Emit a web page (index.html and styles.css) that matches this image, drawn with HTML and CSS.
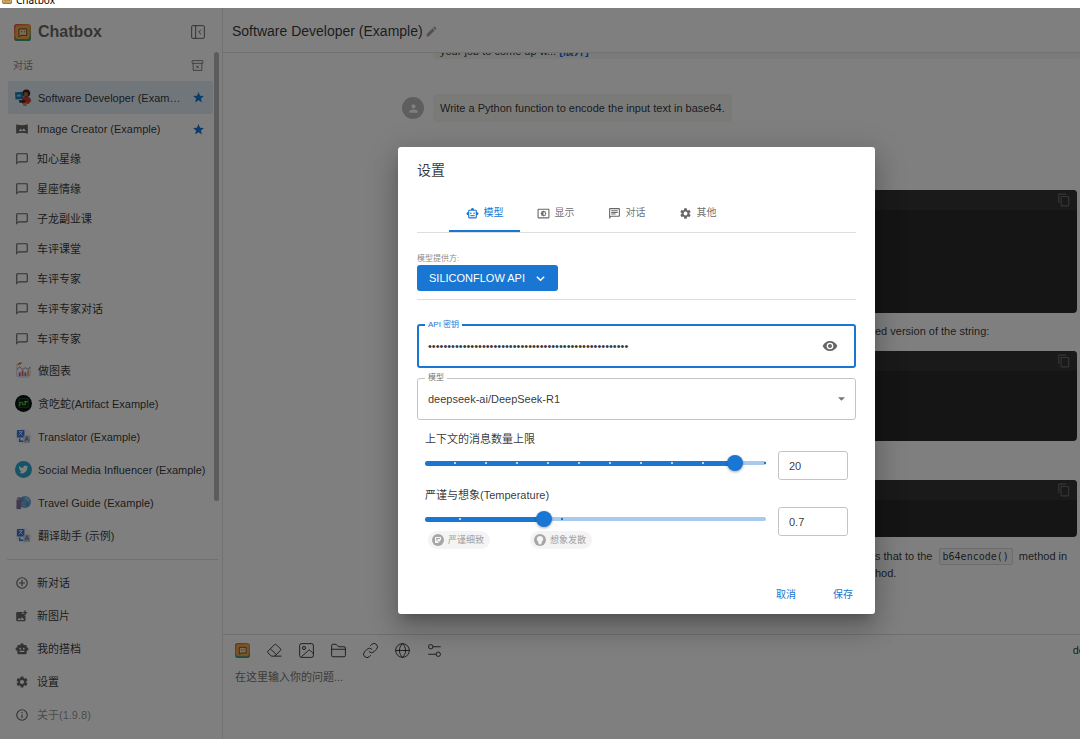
FILE: index.html
```html
<!DOCTYPE html>
<html lang="zh-CN">
<head>
<meta charset="utf-8">
<title>Chatbox</title>
<link rel="stylesheet" href="styles.css">
</head>
<body>
<svg class="sprite" aria-hidden="true">
  <defs>
    <linearGradient id="logo-edge" x1="0" y1="0" x2="1" y2="1"><stop offset="0" stop-color="#e0503c"/><stop offset=".5" stop-color="#e89a3c"/><stop offset="1" stop-color="#3c9a8c"/></linearGradient>
  </defs>
  <symbol id="logo" viewBox="0 0 24 24"><rect width="24" height="24" rx="4" fill="url(#logo-edge)"/><path d="M1 17v3a4 4 0 0 0 4 4h14a4 4 0 0 0 4-4v-3z" fill="#3c9a7c"/><rect x="2" y="2" width="20" height="19" rx="3" fill="#f0a850"/><path d="M7 7h11v9h-8l-3 2z" fill="#f6d9a8" stroke="#7a4a28" stroke-width="1.4" stroke-linejoin="round"/><path d="M10 11h1.5M14 11h1.5" stroke="#7a4a28" stroke-width="1.6"/></symbol>
  <symbol id="bubble" viewBox="0 0 24 24"><path d="M20 2H4c-1.100 0-2 .9-2 2v18l4-4h14c1.100 0 2-.9 2-2V4c0-1.100-.9-2-2-2zm0 14H6l-2 2V4h16v12z"/></symbol>
  <symbol id="star" viewBox="0 0 24 24"><path d="M12 17.270 18.180 21l-1.640-7.030L22 9.240l-7.190-.61L12 2 9.190 8.630 2 9.240l5.460 4.730L5.820 21z"/></symbol>
  <symbol id="gear" viewBox="0 0 24 24"><path d="M19.140 12.940c.04-.3.06-.61.06-.94 0-.32-.02-.64-.07-.94l2.030-1.580c.18-.14.23-.41.12-.61l-1.920-3.320c-.12-.22-.37-.29-.59-.22l-2.390.96c-.5-.38-1.030-.7-1.620-.94l-.36-2.540c-.04-.24-.24-.41-.48-.41h-3.840c-.24 0-.43.17-.47.41l-.36 2.540c-.59.24-1.130.57-1.620.94l-2.390-.96c-.22-.08-.47 0-.59.22L2.740 8.870c-.12.21-.08.47.12.61l2.030 1.580c-.05.3-.09.63-.09.94s.02.64.07.94l-2.030 1.580c-.18.14-.23.41-.12.61l1.920 3.320c.12.22.37.29.59.22l2.390-.96c.5.38 1.030.7 1.620.94l.36 2.540c.05.24.24.41.48.41h3.840c.24 0 .44-.17.47-.41l.36-2.540c.59-.24 1.130-.56 1.620-.94l2.390.96c.22.08.47 0 .59-.22l1.920-3.320c.12-.22.07-.47-.12-.61l-2.010-1.580zM12 15.600a3.600 3.600 0 1 1 0-7.200 3.600 3.600 0 0 1 0 7.200z"/></symbol>
  <symbol id="robot" viewBox="0 0 24 24"><path d="M20 9V7c0-1.100-.9-2-2-2h-3c0-1.660-1.340-3-3-3S9 3.340 9 5H6c-1.100 0-2 .9-2 2v2c-1.660 0-3 1.340-3 3s1.340 3 3 3v4c0 1.100.9 2 2 2h12c1.100 0 2-.9 2-2v-4c1.660 0 3-1.340 3-3s-1.340-3-3-3zM7.500 11.500a1.500 1.500 0 1 1 3 0 1.500 1.500 0 0 1-3 0zM16 17H8v-2h8v2zm-1-4a1.500 1.500 0 1 1 0-3 1.500 1.500 0 0 1 0 3z"/></symbol>
  <symbol id="robot-line" viewBox="0 0 24 24"><path fill-rule="evenodd" d="M20 9V7c0-1.100-.9-2-2-2h-3c0-1.660-1.340-3-3-3S9 3.340 9 5H6c-1.100 0-2 .9-2 2v2c-1.660 0-3 1.340-3 3s1.340 3 3 3v4c0 1.100.9 2 2 2h12c1.100 0 2-.9 2-2v-4c1.660 0 3-1.340 3-3s-1.340-3-3-3zM18 19H6V7h12v12z"/><circle cx="9" cy="11.500" r="1.500"/><circle cx="15" cy="11.500" r="1.500"/><path d="M8 15h8v2H8z"/></symbol>
  <symbol id="display" viewBox="0 0 24 24"><path d="M21 3H3c-1.100 0-2 .9-2 2v14c0 1.100.9 2 2 2h18c1.100 0 2-.9 2-2V5c0-1.100-.9-2-2-2zm0 16H3V5h18v14z"/><path fill-rule="evenodd" d="M8 16h2.500l1.500 1.500 1.500-1.500H16v-2.500l1.500-1.500-1.500-1.500V8h-2.500L12 6.500 10.500 8H8v2.500L6.500 12 8 13.500zM12 9a3 3 0 0 1 0 6z"/></symbol>
  <symbol id="chat" viewBox="0 0 24 24"><path d="M4 4h16v12H5.200L4 17.200V4m0-2c-1.100 0-2 .9-2 2v18l4-4h14c1.100 0 2-.9 2-2V4c0-1.100-.9-2-2-2H4zm2 10h8v2H6v-2zm0-3h12v2H6V9zm0-3h12v2H6V6z"/></symbol>
  <symbol id="copy" viewBox="0 0 24 24"><path d="M16 1H4c-1.100 0-2 .9-2 2v14h2V3h12V1zm3 4H8c-1.100 0-2 .9-2 2v14c0 1.100.9 2 2 2h11c1.100 0 2-.9 2-2V7c0-1.100-.9-2-2-2zm0 16H8V7h11v14z"/></symbol>
  <symbol id="pencil" viewBox="0 0 24 24"><path d="M3 17.250V21h3.750L17.810 9.940l-3.750-3.750L3 17.250zM20.710 7.040c.39-.39.39-1.020 0-1.410l-2.340-2.340c-.39-.39-1.020-.39-1.410 0l-1.830 1.830 3.750 3.750 1.830-1.830z"/></symbol>
  <symbol id="person" viewBox="0 0 24 24"><path d="M12 12c2.210 0 4-1.790 4-4s-1.790-4-4-4-4 1.790-4 4 1.790 4 4 4zm0 2c-2.670 0-8 1.340-8 4v2h16v-2c0-2.660-5.330-4-8-4z"/></symbol>
  <symbol id="eye" viewBox="0 0 24 24"><path d="M12 4.500C7 4.500 2.730 7.610 1 12c1.730 4.390 6 7.500 11 7.500s9.270-3.110 11-7.500c-1.730-4.390-6-7.500-11-7.500zM12 17a5 5 0 1 1 0-10 5 5 0 0 1 0 10zm0-8a3 3 0 1 0 0 6 3 3 0 0 0 0-6z"/></symbol>
  <symbol id="plus" viewBox="0 0 24 24"><path d="M13 7h-2v4H7v2h4v4h2v-4h4v-2h-4V7zm-1-5a10 10 0 1 0 0 20 10 10 0 0 0 0-20zm0 18a8 8 0 1 1 0-16 8 8 0 0 1 0 16z"/></symbol>
  <symbol id="info" viewBox="0 0 24 24"><path d="M11 7h2v2h-2zm0 4h2v6h-2zm1-9a10 10 0 1 0 0 20 10 10 0 0 0 0-20zm0 18a8 8 0 1 1 0-16 8 8 0 0 1 0 16z"/></symbol>
  <symbol id="add-photo" viewBox="0 0 24 24"><path d="M19 7v3h-3V7h-3V5h3V2h2v3h3v2zM18 11h-2V8h-4V5H4a2 2 0 0 0-2 2v12c0 1.100.9 2 2 2h12a2 2 0 0 0 2-2zM4 19l3-4 2 3 3-4 4 5z"/></symbol>
  <symbol id="panorama" viewBox="0 0 24 24"><path d="M21.400 4c-.1 0-.2 0-.4.100C18 5 15 5.400 12 5.400S6 5 3 4.100C2.400 3.900 2 4.200 2 4.900v14.200c0 .7.400 1 1 .8 3-.9 6-1.300 9-1.300s6 .4 9 1.300c.6.2 1-.1 1-.8V4.900c0-.6-.3-.9-.6-.9zM6 16.200l3.500-5 2.700 3.300 3-4 3.800 5.700c-4.300-.8-8.700-.8-13 0z"/></symbol>
</svg>

<header class="titlebar"><svg class="titlebar-logo"><use href="#logo"/></svg><span>Chatbox</span></header>

<div class="app">
  <aside class="sidebar">
    <div class="brand">
      <svg class="brand-logo"><use href="#logo"/></svg>
      <h1>Chatbox</h1>
      <button class="icon-button" aria-label="收起"><svg class="i16 line" viewBox="0 0 24 24"><rect x="2.500" y="2.500" width="19" height="19" rx="1.500"/><path d="M8.500 2.500v19M16.500 8.500 13 12l3.500 3.500"/></svg></button>
    </div>
    <div class="list-head">
      <span>对话</span>
      <button class="icon-button" aria-label="清空"><svg class="i13 line" viewBox="0 0 24 24"><rect x="2" y="3" width="20" height="5" rx="1"/><path d="M4 8v13h16V8M9.500 12l5 5M14.500 12l-5 5"/></svg></button>
    </div>
    <nav class="sessions">
      <a class="row tall selected" href="#"><svg class="avatar" viewBox="0 0 18 18"><path d="M0 3.500 9 3v7.500l-8.500.5z" fill="#1f7fae"/><path d="M2 6h4v2H2z" fill="#8cd3ee"/><circle cx="12" cy="4.500" r="4" fill="#38221f"/><circle cx="11.500" cy="5.500" r="2.300" fill="#a4683f"/><path d="M7 13c0-4 2-5 5-5s5 2 5 5l-3 3H8z" fill="#d8362c"/><path d="M4 12h7v2.500H5z" fill="#302e3c"/><path d="m8 15 5-1-1 4H9z" fill="#d98a33"/></svg><span>Software Developer (Example)</span><svg class="star"><use href="#star"/></svg></a>
      <a class="row" href="#"><svg class="glyph"><use href="#panorama"/></svg><span>Image Creator (Example)</span><svg class="star"><use href="#star"/></svg></a>
      <a class="row" href="#"><svg class="glyph"><use href="#bubble"/></svg><span>知心星缘</span></a>
      <a class="row" href="#"><svg class="glyph"><use href="#bubble"/></svg><span>星座情缘</span></a>
      <a class="row" href="#"><svg class="glyph"><use href="#bubble"/></svg><span>子龙副业课</span></a>
      <a class="row" href="#"><svg class="glyph"><use href="#bubble"/></svg><span>车评课堂</span></a>
      <a class="row" href="#"><svg class="glyph"><use href="#bubble"/></svg><span>车评专家</span></a>
      <a class="row" href="#"><svg class="glyph"><use href="#bubble"/></svg><span>车评专家对话</span></a>
      <a class="row" href="#"><svg class="glyph"><use href="#bubble"/></svg><span>车评专家</span></a>
      <a class="row tall" href="#"><svg class="avatar" viewBox="0 0 18 18"><path d="M2 2v13l3 1h9l2-2V6" fill="none" stroke="#c9c6da"/><path d="m2 8 3-3 3 3 3-2 3 2 2-3" fill="none" stroke="#8584a4"/><path d="M3 2.500 7 1" stroke="#d47c43" stroke-width="2"/><path d="M5 15V11" stroke="#c5568b" stroke-width="2"/><path d="M8 15V9" stroke="#e8614f" stroke-width="2"/><path d="M11 15v-4" stroke="#5c7cda" stroke-width="2"/><path d="M14 15V9" stroke="#e8a044" stroke-width="2"/></svg><span>做图表</span></a>
      <a class="row tall" href="#"><svg class="avatar" viewBox="0 0 18 18"><circle cx="9" cy="9" r="9" fill="#0a1410"/><path d="M4 4h10v9H4z" fill="#061a0c" stroke="#245a38"/><path d="M5 12V8h3v2h3V7h3" fill="none" stroke="#3da834" stroke-width="1.500"/><circle cx="11" cy="7" r="1" fill="#d8c030"/></svg><span>贪吃蛇(Artifact Example)</span></a>
      <a class="row tall" href="#"><svg class="avatar" viewBox="0 0 18 18"><circle cx="9" cy="9" r="8.500" fill="#f4f4f6"/><rect x="2" y="2" width="8" height="8" rx="1" fill="#3872e0"/><path d="M4 4h4M6 3v1M4 8l3.500-4M5 5l3 3" stroke="#fff" stroke-width=".8"/><path d="M5 11v3h4" fill="none" stroke="#3872e0" stroke-width="1.500"/><rect x="9" y="8" width="7" height="8" rx="1" fill="#c8ccd4"/><path d="m10.500 14 2-5 2 5M11 12.500h3" fill="none" stroke="#5578b8"/></svg><span>Translator (Example)</span></a>
      <a class="row tall" href="#"><svg class="avatar" viewBox="0 0 18 18"><circle cx="9" cy="9" r="9" fill="#27a9d3"/><path d="M14 5.800c-.4.200-.8.300-1.200.3.400-.2.700-.6.900-1-.4.200-.8.400-1.300.5A2.100 2.100 0 0 0 8.800 7.500 6 6 0 0 1 4.500 5.300a2.100 2.100 0 0 0 .7 2.800c-.3 0-.7-.1-.9-.3 0 1 .7 1.900 1.700 2.100-.3.100-.6.100-.9 0 .2.800 1 1.500 1.900 1.500A4.300 4.300 0 0 1 4 12.300a6 6 0 0 0 9-5.400c.4-.3.700-.7 1-1.100z" fill="#fff"/></svg><span class="full">Social Media Influencer (Example)</span></a>
      <a class="row tall" href="#"><svg class="avatar" viewBox="0 0 18 18"><circle cx="10.500" cy="8.500" r="6.500" fill="#62b2d8"/><path d="M6 4c3-2 4 1 3 3s-2 3-4 1zM11 9c3-2 5 0 4 3s-3 2-4 0z" fill="#728cc9"/><path d="m11 4 4 3" stroke="#d9e9f5"/><path d="M1.500 6h5v10h-5z" fill="#8770a5"/><path d="M3 6V4h2v2" fill="none" stroke="#675a86"/></svg><span>Travel Guide (Example)</span></a>
      <a class="row tall" href="#"><svg class="avatar" viewBox="0 0 18 18"><circle cx="9" cy="9" r="8.500" fill="#f4f4f6"/><rect x="2" y="2" width="8" height="8" rx="1" fill="#3872e0"/><path d="M4 4h4M6 3v1M4 8l3.500-4M5 5l3 3" stroke="#fff" stroke-width=".8"/><path d="M5 11v3h4" fill="none" stroke="#3872e0" stroke-width="1.500"/><rect x="9" y="8" width="7" height="8" rx="1" fill="#c8ccd4"/><path d="m10.500 14 2-5 2 5M11 12.500h3" fill="none" stroke="#5578b8"/></svg><span>翻译助手 (示例)</span></a>
      <i class="scroll-thumb"></i>
    </nav>
    <nav class="menu">
      <a class="row tall" href="#"><svg class="glyph"><use href="#plus"/></svg><span>新对话</span></a>
      <a class="row tall" href="#"><svg class="glyph"><use href="#add-photo"/></svg><span>新图片</span></a>
      <a class="row tall" href="#"><svg class="glyph"><use href="#robot"/></svg><span>我的搭档</span></a>
      <a class="row tall" href="#"><svg class="glyph"><use href="#gear"/></svg><span>设置</span></a>
      <a class="row tall muted" href="#"><svg class="glyph"><use href="#info"/></svg><span>关于(1.9.8)</span></a>
    </nav>
  </aside>

  <main class="main">
    <div class="chat-head"><h2>Software Developer (Example)</h2><button class="icon-button" aria-label="编辑"><svg class="i13 faint"><use href="#pencil"/></svg></button></div>
    <section class="chat">
      <article class="message"><div class="bubble wide">your job to come up w... <a href="#">[展开]</a></div></article>
      <article class="message user"><span class="face"><svg class="i13"><use href="#person"/></svg></span><div class="bubble">Write a Python function to encode the input text in base64.</div></article>
      <article class="message answer">
        <pre class="code large"><span class="code-head"><svg class="i14"><use href="#copy"/></svg></span></pre>
        <p>ed version of the string:</p>
        <pre class="code medium"><span class="code-head"><svg class="i14"><use href="#copy"/></svg></span></pre>
        <pre class="code small"><span class="code-head"><svg class="i14"><use href="#copy"/></svg></span></pre>
        <p>s that to the <code>b64encode()</code> method in<br>hod.</p>
      </article>
    </section>
    <section class="composer">
      <div class="tools">
        <button class="icon-button" aria-label="Chatbox"><svg class="tool"><use href="#logo"/></svg></button>
        <button class="icon-button" aria-label="清除"><svg class="tool line" viewBox="0 0 24 24"><path d="m7 21-5.300-5.300a2 2 0 0 1 0-2.800L12 2.600a2 2 0 0 1 2.800 0l6.600 6.600a2 2 0 0 1 0 2.800L12.400 21M23 21H7M5.500 9.500l9.500 9"/></svg></button>
        <button class="icon-button" aria-label="图片"><svg class="tool line" viewBox="0 0 24 24"><rect x="1" y="1" width="22" height="22" rx="3"/><circle cx="8" cy="8" r="2.500"/><path d="m4 22 11-10a2 2 0 0 1 3 0l5 5"/></svg></button>
        <button class="icon-button" aria-label="文件"><svg class="tool line" viewBox="0 0 24 24"><path d="M1 20V4a2 2 0 0 1 2-2h5l4 4h9a2 2 0 0 1 2 2v12a2 2 0 0 1-2 2H3a2 2 0 0 1-2-2zM1 10h22"/></svg></button>
        <button class="icon-button" aria-label="链接"><svg class="tool line" viewBox="0 0 24 24"><path d="M9.500 13.500a5.500 5.500 0 0 0 8 .5l4-4a5.400 5.400 0 0 0-7.700-7.700L11.500 4.500M14.500 10.500a5.500 5.500 0 0 0-8-.5l-4 4a5.400 5.400 0 0 0 7.700 7.700l2.300-2.200"/></svg></button>
        <button class="icon-button" aria-label="网络"><svg class="tool line" viewBox="0 0 24 24"><circle cx="12" cy="12" r="11"/><path d="M12 1c-6.500 6-6.500 16 0 22 6.500-6 6.500-16 0-22zM1 12h22"/></svg></button>
        <button class="icon-button" aria-label="参数"><svg class="tool line" viewBox="0 0 24 24"><circle cx="6" cy="6" r="3.500"/><circle cx="18" cy="18" r="3.500"/><path d="M9.500 6H22M2 18h12.500M2 6h.5"/></svg></button>
        <span class="model-name">de</span>
      </div>
      <textarea aria-label="消息" placeholder="在这里输入你的问题..."></textarea>
    </section>
  </main>

  <div class="backdrop">
    <section class="dialog" role="dialog" aria-labelledby="dialog-title">
      <h2 id="dialog-title">设置</h2>
      <div class="tabs" role="tablist">
        <button class="tab active" role="tab"><svg class="i13"><use href="#robot-line"/></svg>模型</button>
        <button class="tab" role="tab"><svg class="i13"><use href="#display"/></svg>显示</button>
        <button class="tab" role="tab"><svg class="i13"><use href="#chat"/></svg>对话</button>
        <button class="tab" role="tab"><svg class="i13"><use href="#gear"/></svg>其他</button>
      </div>
      <div class="provider">
        <span class="caption">模型提供方:</span>
        <button class="provider-button">SILICONFLOW API<svg class="chevron" viewBox="0 0 12 12"><path d="m2 4 4 4 4-4"/></svg></button>
      </div>
      <fieldset class="field focused">
        <legend><label for="key">API 密钥</label></legend>
        <div class="field-body"><input id="key" type="password" value="sk-0000000000000000000000000000000000000000000000000"><button class="icon-button" aria-label="显示密钥"><svg class="i16"><use href="#eye"/></svg></button></div>
      </fieldset>
      <fieldset class="field">
        <legend><label for="model">模型</label></legend>
        <div class="field-body"><select id="model"><option>deepseek-ai/DeepSeek-R1</option></select><svg class="caret" viewBox="0 0 8 4"><path d="M0 0h8L4 4z"/></svg></div>
      </fieldset>
      <div class="setting">
        <label for="context">上下文的消息数量上限</label>
        <div class="setting-row">
          <div class="slider"><div class="rail"></div><div class="fill" style="width:90.9%"></div><div class="ticks"></div><input id="context" type="range" min="0" max="22" value="20"></div>
          <input class="number" type="text" value="20" aria-label="消息数量">
        </div>
      </div>
      <div class="setting">
        <label for="temperature">严谨与想象(Temperature)</label>
        <div class="setting-row">
          <div class="slider"><div class="rail"></div><div class="fill" style="width:35%"></div><div class="marks"></div><input id="temperature" type="range" min="0" max="2" step="0.1" value="0.7"></div>
          <input class="number" type="text" value="0.7" aria-label="Temperature">
        </div>
        <div class="chips">
          <span class="chip"><svg class="chip-icon" viewBox="0 0 24 24"><circle cx="12" cy="12" r="12" fill="#a6a6a6"/><path d="M6 6h12v6l-5 6H6z" fill="#f4f4f4"/><path d="M8 9h8M8 12h4m0 3 3 2 5-6" fill="none" stroke="#a6a6a6" stroke-width="2"/></svg>严谨细致</span>
          <span class="chip"><svg class="chip-icon" viewBox="0 0 24 24"><circle cx="12" cy="12" r="12" fill="#a6a6a6"/><path d="M12 4a6.500 6.500 0 0 0-3.500 12v2h7v-2A6.500 6.500 0 0 0 12 4zM9 18h6v1l-2 2h-2l-2-2z" fill="#f4f4f4"/></svg>想象发散</span>
        </div>
      </div>
      <div class="actions"><button>取消</button><button>保存</button></div>
    </section>
  </div>
</div>
</body>
</html>
```
FILE: styles.css
```css
* { box-sizing: border-box; }

body {
  margin: 0;
  height: 100vh;
  display: flex;
  flex-direction: column;
  overflow: hidden;
  background: #fff;
  color: rgba(0, 0, 0, .8);
  font: 11px/16px "Liberation Sans", "Noto Sans CJK SC", sans-serif;
}

h1, h2, p, pre, fieldset, legend { margin: 0; padding: 0; }
h2 { font-size: 14px; line-height: 20px; font-weight: 400; }
a { color: inherit; text-decoration: none; }
button, input, select, textarea { font: inherit; color: inherit; margin: 0; padding: 0; border: 0; background: none; outline: 0; }
svg { display: block; flex: none; fill: currentColor; }

.sprite { position: absolute; width: 0; height: 0; }
.i13 { width: 13px; height: 13px; }
.i14 { width: 14px; height: 14px; }
.i16 { width: 16px; height: 16px; }
.faint { opacity: .6; }
.line { fill: none; stroke: currentColor; stroke-width: 1.5; }
.icon-button { display: flex; color: rgba(0, 0, 0, .6); }

.titlebar {
  flex: none;
  height: 8px;
  display: flex;
  align-items: flex-end;
  gap: 4px;
  padding: 0 2px 2px;
  overflow: hidden;
  font: 10px/12px "Noto Sans", sans-serif;
  color: #000;
}
.titlebar-logo { width: 10px; height: 10px; margin-bottom: 2px; }

.app { position: relative; flex: 1; min-height: 0; display: flex; }

/* Sidebar */
.sidebar { flex: none; width: 223px; display: flex; flex-direction: column; border-right: 1px solid #e4e4e4; }
.brand { height: 46px; display: flex; align-items: center; gap: 7px; padding: 2px 16px 0 14px; }
.brand-logo { width: 17px; height: 17px; }
.brand h1 { flex: 1; font-size: 16px; line-height: 20px; color: rgba(0, 0, 0, .6); }
.list-head { height: 27px; display: flex; align-items: center; justify-content: space-between; padding: 0 18px 4px 13px; font-size: 10px; color: rgba(0, 0, 0, .5); }
.sessions { position: relative; padding: 0 9px 7px 8px; }
.row { display: flex; align-items: center; height: 30px; padding: 0 8px 0 5px; border-radius: 2px; white-space: nowrap; }
.row.tall { height: 33px; }
.row span { flex: 1; overflow: hidden; text-overflow: ellipsis; }
.row span.full { overflow: visible; }
.row.selected { background: #e3edf7; }
.row.muted { color: rgba(0, 0, 0, .45); }
.avatar { width: 17px; height: 17px; margin: 0 6px 0 2px; }
.glyph { width: 14px; height: 14px; margin: 0 8px 0 2px; color: rgba(0, 0, 0, .6); }
.star { width: 13px; height: 13px; margin-left: 8px; color: #1976d2; }
.scroll-thumb { position: absolute; top: -29px; right: 3px; bottom: 58px; width: 5px; border-radius: 3px; background: #b8b8b8; }
.menu { margin: 0 4px 0 7px; padding: 6px 5px 0 1px; border-top: 1px solid #dedede; }

/* Conversation */
.main { flex: 1; min-width: 0; display: flex; flex-direction: column; }
.chat-head { flex: none; height: 45px; display: flex; align-items: center; gap: 2px; padding: 2px 9px 0; border-bottom: 1px solid #e4e4e4; }
.chat { flex: 1; min-height: 0; display: flex; flex-direction: column; justify-content: flex-end; overflow: hidden; padding: 0 3px 52px 179px; }
.message { flex: none; display: flex; align-items: flex-start; padding-left: 31px; }
.message.user { gap: 9px; align-items: center; margin: 35px 0 68px; padding-left: 0; }
.face { width: 22px; height: 22px; display: flex; align-items: center; justify-content: center; border-radius: 50%; background: #bdbdbd; color: #fff; }
.bubble { padding: 6px 7px; border-radius: 4px; background: #f5f4f3; }
.bubble.wide { flex: 1; margin-right: -3px; padding-bottom: 0; }
.bubble a { color: #1b66e0; font-weight: 700; }
.message.answer { display: block; padding-left: 38px; }
.answer p { padding-left: 435px; line-height: 17px; white-space: nowrap; }
.answer code { margin: 0 3px; padding: 2px 3px; border: 1px solid #d8d8d8; border-radius: 2px; background: #f6f6f6; font: 10px/14px "DejaVu Sans Mono", monospace; }
.code { border-radius: 4px; overflow: hidden; background: #2b2b2b; }
.code-head { display: flex; justify-content: flex-end; padding: 3px 6px; background: #343434; color: #6a6a6a; }
.code.large { height: 123px; margin-bottom: 10px; }
.code.medium { height: 90px; margin: 11px 0 39px; }
.code.small { height: 57px; margin-bottom: 11px; }

.composer { flex: none; height: 105px; display: flex; flex-direction: column; gap: 11px; padding: 7px 0 0 12px; border-top: 1px solid #dedede; }
.tools { display: flex; align-items: center; gap: 17px; }
.tool { width: 15px; height: 15px; }
.tools .icon-button { color: rgba(0, 0, 0, .8); }
.model-name { margin: 0 -5px 0 auto; }
.composer textarea { flex: 1; resize: none; }
.composer textarea::placeholder { color: #757575; }

/* Settings dialog */
.backdrop {
  position: absolute;
  inset: 0;
  display: flex;
  align-items: center;
  justify-content: center;
  padding: 14px 0 0 193px;
  background: rgba(0, 0, 0, .5);
}
.dialog {
  width: 477px;
  padding: 13px 19px 8px;
  border-radius: 3px;
  background: #fff;
  box-shadow: 0 8px 10px -5px rgba(0, 0, 0, .2), 0 16px 26px 2px rgba(0, 0, 0, .14), 0 6px 31px 5px rgba(0, 0, 0, .12);
}
.tabs { display: flex; margin-top: 12px; padding-left: 32px; border-bottom: 1px solid #dedede; }
.tab { width: 71px; height: 40px; display: flex; align-items: center; justify-content: center; gap: 5px; padding-top: 4px; border-bottom: 2px solid transparent; font-size: 10px; color: rgba(0, 0, 0, .6); }
.tab.active { border-color: #1976d2; color: #1976d2; }
.provider { display: flex; flex-direction: column; align-items: flex-start; padding: 19px 0 8px; border-bottom: 1px solid #dedede; }
.caption { font-size: 8px; line-height: 13px; color: rgba(0, 0, 0, .5); }
.provider-button { height: 26px; display: flex; align-items: center; gap: 10px; padding: 0 12px; border-radius: 3px; background: #1976d2; color: #fff; }
.chevron { width: 11px; height: 11px; fill: none; stroke: currentColor; stroke-width: 1.6; }
.field { min-width: 0; margin-top: 4px; padding: 0 10px; border: 1px solid #c4c4c4; border-radius: 3px; }
.field legend { margin-left: -3px; padding: 0 3px; font-size: 8px; line-height: 12px; color: rgba(0, 0, 0, .6); }
.field-body { height: 35px; display: flex; align-items: center; padding-bottom: 6px; }
.field-body input, .field-body select { flex: 1; min-width: 0; appearance: none; }
.field-body .icon-button { margin-right: 7px; }
.field.focused { margin-top: 19px; padding: 0 9px; border: 2px solid #1976d2; }
.field.focused legend { color: #1976d2; }
.caret { width: 7px; height: 4px; color: rgba(0, 0, 0, .54); }
.setting { padding: 0 8px; margin-top: 11px; }
.setting > label { display: block; }
.setting-row { display: flex; align-items: flex-start; gap: 12px; margin-top: 4px; }
.setting + .setting { margin-top: 7px; }
.slider { flex: 1; height: 24px; display: grid; align-items: center; }
.slider > * { grid-area: 1 / 1; }
.rail { height: 4px; border-radius: 2px; background: #a7caed; }
.fill { height: 5px; border-radius: 3px; background: #1976d2; }
.ticks { height: 2px; background: linear-gradient(#1976d2, #1976d2) right / 2px 2px no-repeat, repeating-linear-gradient(90deg, transparent 0 calc(100% / 11 - 2px), #b9d5f1 calc(100% / 11 - 2px) calc(100% / 11)); }
.marks { height: 2px; background: linear-gradient(#b9d5f1, #b9d5f1) 10% 0 / 2px 2px no-repeat, linear-gradient(#1976d2, #1976d2) 40% 0 / 2px 2px no-repeat; }
.slider input { z-index: 1; height: 16px; margin: 0 -8px; appearance: none; }
.slider input::-webkit-slider-thumb { appearance: none; width: 16px; height: 16px; border-radius: 50%; background: #1976d2; box-shadow: 0 1px 3px rgba(0, 0, 0, .35); }
.number { width: 70px; height: 29px; padding: 0 10px; border: 1px solid #c4c4c4; border-radius: 3px; }
.chips { display: flex; gap: 40px; margin: -5px 0 0 3px; }
.chip { width: 62px; height: 18px; display: flex; align-items: center; gap: 4px; padding: 0 4px; border-radius: 9px; background: #f4f4f4; color: #a0a0a0; font-size: 9px; white-space: nowrap; }
.chip-icon { width: 12px; height: 12px; }
.actions { display: flex; justify-content: flex-end; gap: 37px; margin-top: 37px; padding: 0 3px 2px 0; }
.actions button { height: 18px; color: #1976d2; font-size: 10px; }
```
